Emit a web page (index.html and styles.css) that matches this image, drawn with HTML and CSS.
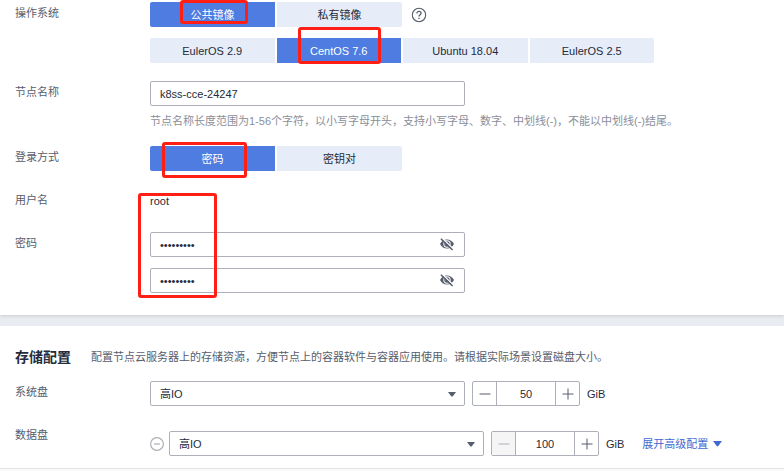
FILE: index.html
```
<!DOCTYPE html>
<html lang="zh-CN">
<head>
    <meta charset="UTF-8">
    <meta name="viewport" content="width=device-width, initial-scale=1.0">
    <title>节点配置</title>
    <link rel="stylesheet" href="styles.css">
</head>
<body>
    <!-- 节点配置 -->
    <section class="card node-card">
        <div class="row">
            <span class="label" id="osLabel">操作系统</span>
            <div class="stack">
                <div class="line">
                    <div class="tabs" role="group" aria-labelledby="osLabel">
                        <button type="button" class="tab active">公共镜像</button>
                        <button type="button" class="tab">私有镜像</button>
                    </div>
                    <button type="button" class="icon-btn" aria-label="帮助">
                        <svg width="16" height="16" viewBox="0 0 16 16" fill="none" stroke="#575d6c">
                            <circle cx="8" cy="8" r="6.7" stroke-width="1.1"/>
                            <path d="M5.9 6.5c0-1.3.9-2.1 2.1-2.1s2.1.8 2.1 1.9c0 1.5-2.1 1.6-2.1 3.3" stroke-width="1.3"/>
                            <path d="M8 10.7v1.4" stroke-width="1.4"/>
                        </svg>
                    </button>
                </div>
                <div class="tabs versions" role="group" aria-labelledby="osLabel">
                    <button type="button" class="tab">EulerOS 2.9</button>
                    <button type="button" class="tab active">CentOS 7.6</button>
                    <button type="button" class="tab">Ubuntu 18.04</button>
                    <button type="button" class="tab">EulerOS 2.5</button>
                </div>
            </div>
        </div>

        <div class="row">
            <label class="label" for="nodeName">节点名称</label>
            <div>
                <div class="field"><input type="text" id="nodeName" value="k8ss-cce-24247"></div>
                <p class="hint">节点名称长度范围为1-56个字符，以小写字母开头，支持小写字母、数字、中划线(-)，不能以中划线(-)结尾。</p>
            </div>
        </div>

        <div class="row">
            <span class="label" id="loginLabel">登录方式</span>
            <div class="tabs" role="group" aria-labelledby="loginLabel">
                <button type="button" class="tab active">密码</button>
                <button type="button" class="tab">密钥对</button>
            </div>
        </div>

        <div class="row">
            <span class="label">用户名</span>
            <span class="value">root</span>
        </div>

        <div class="row">
            <label class="label" for="password">密码</label>
            <div class="stack">
                <div class="field">
                    <input type="password" id="password" value="cce-24247">
                    <button type="button" class="icon-btn" aria-label="显示密码">
                        <svg width="16" height="14" viewBox="0 0 16 14"><use href="#eyeOff"/></svg>
                    </button>
                </div>
                <div class="field">
                    <input type="password" id="confirmPassword" aria-label="确认密码" value="cce-24247">
                    <button type="button" class="icon-btn" aria-label="显示密码">
                        <svg width="16" height="14" viewBox="0 0 16 14"><use href="#eyeOff"/></svg>
                    </button>
                </div>
            </div>
        </div>

        <!-- Marcas rojas sobre el formulario -->
        <div class="mark mark-image"></div>
        <div class="mark mark-system"></div>
        <div class="mark mark-login"></div>
        <div class="mark mark-password"></div>
    </section>

    <!-- 存储配置 -->
    <section class="card storage-card">
        <div class="card-header">
            <h2>存储配置</h2>
            <p>配置节点云服务器上的存储资源，方便节点上的容器软件与容器应用使用。请根据实际场景设置磁盘大小。</p>
        </div>

        <div class="row">
            <label class="label" for="systemDisk">系统盘</label>
            <div class="line disk">
                <div class="field select">
                    <select id="systemDisk"><option>高IO</option></select>
                    <svg class="arrow" width="8" height="5" viewBox="0 0 8 5"><path d="M0 0h8L4.8 4.2q-.8.8-1.6 0z"/></svg>
                </div>
                <div class="stepper">
                    <button type="button" aria-label="减少"><svg width="12" height="12" viewBox="0 0 12 12"><path d="M.5 6h11"/></svg></button>
                    <input type="text" aria-label="系统盘大小" value="50">
                    <button type="button" aria-label="增加"><svg width="12" height="12" viewBox="0 0 12 12"><path d="M.5 6h11M6 .5v11"/></svg></button>
                </div>
                <span class="unit">GiB</span>
            </div>
        </div>

        <div class="row">
            <label class="label" for="dataDisk">数据盘</label>
            <div class="line disk data-disk">
                <button type="button" class="icon-btn remove" aria-label="删除数据盘">
                    <svg width="14" height="14" viewBox="0 0 14 14" fill="none" stroke="#adb0b8">
                        <circle cx="7" cy="7" r="6.4" stroke-width="1.2"/>
                        <path d="M4 7h6" stroke-width="1.2"/>
                    </svg>
                </button>
                <div class="field select">
                    <select id="dataDisk"><option>高IO</option></select>
                    <svg class="arrow" width="8" height="5" viewBox="0 0 8 5"><path d="M0 0h8L4.8 4.2q-.8.8-1.6 0z"/></svg>
                </div>
                <div class="stepper">
                    <button type="button" aria-label="减少" disabled><svg width="12" height="12" viewBox="0 0 12 12"><path d="M.5 6h11"/></svg></button>
                    <input type="text" aria-label="数据盘大小" value="100">
                    <button type="button" aria-label="增加"><svg width="12" height="12" viewBox="0 0 12 12"><path d="M.5 6h11M6 .5v11"/></svg></button>
                </div>
                <span class="unit">GiB</span>
                <a href="#" class="more">展开高级配置 <svg width="9" height="6" viewBox="0 0 9 6"><path d="M0 0h9L5.3 5q-.8.8-1.6 0z"/></svg></a>
            </div>
        </div>
    </section>

    <footer class="footer"></footer>

    <svg class="sprite" aria-hidden="true">
        <symbol id="eyeOff" viewBox="0 0 16 14">
            <path d="M1 6C2.6 3 5 1.500 8 1.500S13.400 3 15 6C13.400 9 11 10.500 8 10.500S2.600 9 1 6z" fill="#575d6c"/>
            <circle cx="8" cy="6" r="3.700" fill="#fff"/>
            <circle cx="8" cy="6" r="2.700" fill="#575d6c"/>
            <path d="M6.900 6.300a1.300 1.300 0 0 1 1.500-1.500" fill="none" stroke="#fff"/>
            <path d="M3.200.2l11 10.600" stroke="#fff" stroke-width="1.200"/>
            <path d="M1.900.7l11.700 11.300" stroke="#575d6c" stroke-width="1.500"/>
        </symbol>
    </svg>
</body>
</html>
```

FILE: styles.css
```
* {
    box-sizing: border-box;
}

body {
    display: flex;
    flex-direction: column;
    gap: 11px;
    min-height: 100vh;
    margin: 0;
    background-color: #e9edf2;
    color: #252b3a;
    font-family: "Liberation Sans", "Noto Sans CJK SC", sans-serif;
    font-size: 11px;
    line-height: 22px;
}

h2, p {
    margin: 0;
}

button, input, select {
    margin: 0;
    padding: 0;
    border: none;
    background: none;
    color: inherit;
    font: inherit;
}

button {
    cursor: pointer;
}

svg {
    display: block;
}

.card {
    position: relative;
    display: flex;
    flex-direction: column;
    gap: 18px;
    padding: 2px 15px 22px;
    background-color: #ffffff;
}

.node-card {
    box-shadow: 0 1px 3px rgba(0, 0, 0, 0.15);
}

.row {
    display: grid;
    grid-template-columns: 135px 1fr;
}

.label {
    color: #575d6c;
}

.value {
    line-height: 25px;
}

.stack {
    display: flex;
    flex-direction: column;
    gap: 11px;
}

.line {
    display: flex;
    align-items: center;
}

/* Botones de selección */
.tabs {
    display: flex;
    gap: 2px;
}

.tab {
    width: 125px;
    height: 25px;
    background-color: #e6edf9;
}

.versions {
    max-width: 504px;
}

.tab:first-child {
    border-radius: 2px 0 0 2px;
}

.tab:last-child {
    border-radius: 0 2px 2px 0;
}

.tab.active {
    background-color: #4e7ce0;
    color: #ffffff;
}

.icon-btn {
    flex: none;
}

.tabs + .icon-btn {
    margin-left: 9px;
}

/* Campos */
.field {
    display: flex;
    align-items: center;
    width: 315px;
    height: 25px;
    padding-right: 9px;
    border: 1px solid #adb0b8;
    border-radius: 2px;
}

.field input {
    flex: 1;
    min-width: 0;
    height: 100%;
    padding-left: 9px;
}

.hint {
    margin-top: 8px;
    color: #8a8e99;
    line-height: 14px;
}

.select {
    position: relative;
    padding: 0;
}

.select select {
    width: 100%;
    height: 100%;
    padding: 0 24px 0 9px;
    appearance: none;
}

.arrow {
    position: absolute;
    right: 8px;
    top: 10px;
    fill: #575d6c;
    pointer-events: none;
}

/* Almacenamiento */
.storage-card {
    flex: 1;
    padding: 21px 15px 11px;
}

.card-header {
    display: flex;
    align-items: center;
    gap: 20px;
    height: 20px;
    margin-bottom: -4px;
    color: #575d6c;
}

.card-header h2 {
    color: #252b3a;
    font-size: 14px;
}

.stepper {
    display: flex;
    width: 108px;
    height: 25px;
    margin-left: 7px;
    border: 1px solid #adb0b8;
    border-radius: 2px;
}

.stepper button {
    display: flex;
    flex: none;
    align-items: center;
    justify-content: center;
    width: 23px;
}

.stepper button:disabled {
    background-color: #f5f5f6;
    cursor: default;
}

.stepper path {
    stroke: #575d6c;
}

.stepper button:disabled path {
    stroke: #adb0b8;
}

.stepper input {
    flex: 1;
    min-width: 0;
    border: solid #adb0b8;
    border-width: 0 1px;
    text-align: center;
}

.unit {
    margin-left: 7px;
}

.data-disk {
    padding-top: 7px;
}

.remove {
    margin-right: 5px;
}

.more {
    display: flex;
    align-items: center;
    gap: 5px;
    margin-left: 18px;
    color: #3f6ad0;
    text-decoration: none;
}

.more svg {
    fill: #3f6ad0;
}

.footer {
    height: 3px;
    margin-top: -11px;
    border-top: 1px solid #e2e3e6;
    background-color: #fafafa;
}

/* Marcas rojas */
.mark {
    position: absolute;
    border: 3px solid #ff1f14;
    border-radius: 3px;
    pointer-events: none;
}

.mark-image {
    left: 180px;
    top: 0;
    width: 68px;
    height: 24px;
}

.mark-system {
    left: 298px;
    top: 27px;
    width: 83px;
    height: 37px;
}

.mark-login {
    left: 162px;
    top: 142px;
    width: 85px;
    height: 36px;
}

.mark-password {
    left: 138px;
    top: 193px;
    width: 79px;
    height: 105px;
}

.sprite {
    position: absolute;
    width: 0;
    height: 0;
}
```
